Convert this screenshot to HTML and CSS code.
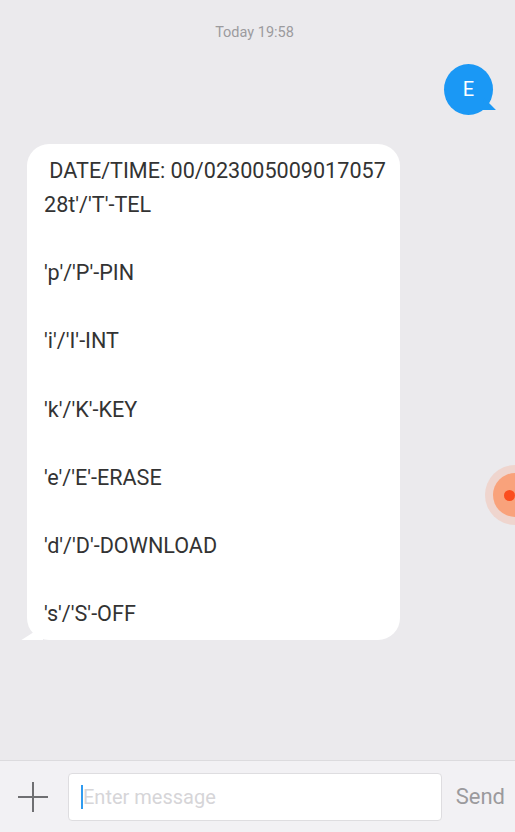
FILE: index.html
```html
<!DOCTYPE html>
<html lang="en">

<head>
  <meta charset="UTF-8">
  <meta name="viewport" content="width=device-width, initial-scale=1.0">
  <title>Messages</title>
  <link rel="stylesheet" href="styles.css">
</head>

<body>
  <section class="chat">
    <div class="chat__time">Today 19:58</div>

    <div class="chat__row chat__row--out">
      <div class="bubble bubble--out">E</div>
    </div>

    <div class="chat__row chat__row--in">
      <div class="bubble bubble--in">&nbsp;DATE/TIME: 00/023005009017057<br>28t'/'T'-TEL<br><br>'p'/'P'-PIN<br><br>'i'/'I'-INT<br><br>'k'/'K'-KEY<br><br>'e'/'E'-ERASE<br><br>'d'/'D'-DOWNLOAD<br><br>'s'/'S'-OFF</div>
    </div>

    <div class="float-btn"><span class="float-btn__dot"></span></div>
  </section>

  <footer class="composer">
    <button class="composer__add" aria-label="Add">
      <svg width="32" height="32" viewBox="0 0 32 32">
        <path d="M16 1v30M1 16h30" stroke="#6f6f72" stroke-width="2" fill="none" />
      </svg>
    </button>
    <div class="composer__input">
      <span class="composer__caret"></span>
      <span class="composer__placeholder">Enter message</span>
    </div>
    <button class="composer__send">Send</button>
  </footer>
</body>

</html>
```

FILE: styles.css
```css
* {
  margin: 0;
  padding: 0;
  box-sizing: border-box;
}

html,
body {
  height: 100%;
}

body {
  display: flex;
  flex-direction: column;
  background-color: #ebeaed;
  font-family: Roboto, 'Noto Sans', sans-serif;
  overflow: hidden;
}

button {
  border: none;
  background: none;
  font-family: inherit;
}

.chat {
  position: relative;
  flex: 1;
  padding: 23px 0 0;
  overflow: hidden;
}

.chat__time {
  padding-right: 6px;
  text-align: center;
  font-size: 14.5px;
  line-height: 20px;
  color: #9c9b9e;
}

.chat__row {
  display: flex;
}

.chat__row--out {
  justify-content: flex-end;
  padding: 21px 22px 0 0;
}

.chat__row--in {
  padding: 29px 0 0 27px;
}

.bubble {
  position: relative;
}

.bubble--out {
  width: 49px;
  height: 51px;
  border-radius: 50%;
  background-color: #1a98f5;
  color: #fff;
  font-size: 20px;
  line-height: 51px;
  text-align: center;
}

.bubble--out::after {
  content: '';
  position: absolute;
  right: -4px;
  bottom: 5px;
  width: 14px;
  height: 12px;
  background-color: #1a98f5;
  clip-path: polygon(0 0, 100% 100%, 0 100%);
  transform: skewX(-10deg);
}

.bubble--in {
  width: 373px;
  padding: 10px 12px 9px 17px;
  border-radius: 22px;
  background-color: #fff;
  color: #333;
  font-size: 21.6px;
  line-height: 34.1px;
}

.bubble--in::before {
  content: '';
  position: absolute;
  left: -6px;
  bottom: 0;
  width: 22px;
  height: 14px;
  background-color: #fff;
  clip-path: polygon(100% 0, 100% 100%, 0 100%);
}

.float-btn {
  position: absolute;
  top: 465px;
  right: -30px;
  width: 60px;
  height: 60px;
  border-radius: 50%;
  background-color: rgba(246, 176, 148, 0.35);
  display: flex;
  align-items: center;
  justify-content: center;
}

.float-btn::before {
  content: '';
  position: absolute;
  width: 44px;
  height: 44px;
  border-radius: 50%;
  background-color: #f9a27b;
}

.float-btn__dot {
  position: relative;
  width: 11px;
  height: 11px;
  margin-left: -12px;
  border-radius: 50%;
  background-color: #fb4d1e;
}

.composer {
  display: flex;
  align-items: center;
  height: 72px;
  padding: 0 10px 0 17px;
  border-top: 1px solid #dcdbde;
  background-color: #f2f1f4;
}

.composer__add {
  display: flex;
  width: 32px;
  height: 32px;
}

.composer__input {
  display: flex;
  align-items: center;
  width: 375px;
  height: 48px;
  margin-left: 19px;
  padding-left: 12px;
  border: 1px solid #dedde0;
  border-radius: 4px;
  background-color: #fff;
}

.composer__caret {
  width: 2px;
  height: 24px;
  background-color: #2f9bf0;
}

.composer__placeholder {
  font-size: 20px;
  color: #d6d5d8;
}

.composer__send {
  margin-left: 14px;
  font-size: 22px;
  color: #9b9a9d;
}
```
